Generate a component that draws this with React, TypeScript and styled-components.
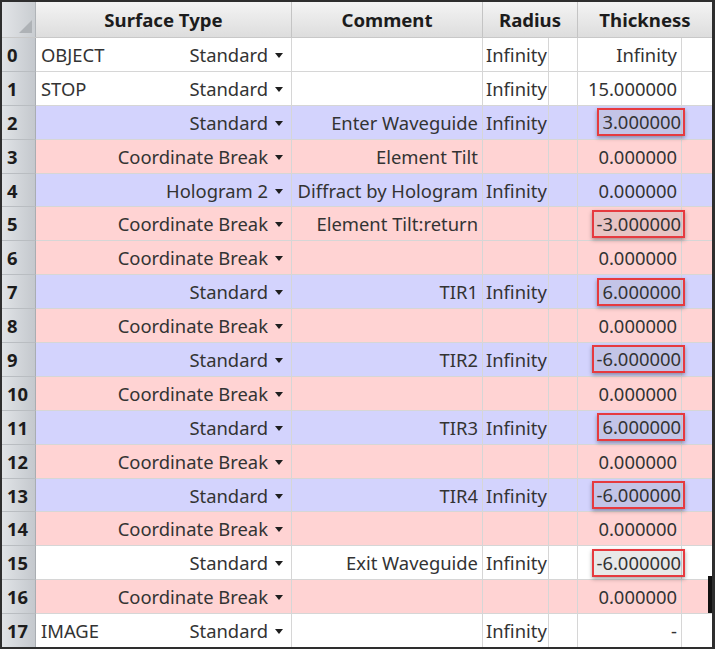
import React from "react";
import styled, { createGlobalStyle } from "styled-components";

const GlobalStyle = createGlobalStyle`
  html, body {
    margin: 0;
    padding: 0;
    background: #ffffff;
  }
  body {
    font-family: "Noto Sans", "Open Sans", sans-serif;
  }
`;

type Tone = "white" | "blue" | "pink";

type Surface = {
  label?: string;
  type: string;
  comment?: string;
  radius?: string;
  thickness: string;
  marked?: boolean;
  tone: Tone;
};

const surfaces: Surface[] = [
  { label: "OBJECT", type: "Standard", radius: "Infinity", thickness: "Infinity", tone: "white" },
  { label: "STOP", type: "Standard", radius: "Infinity", thickness: "15.000000", tone: "white" },
  { type: "Standard", comment: "Enter Waveguide", radius: "Infinity", thickness: "3.000000", marked: true, tone: "blue" },
  { type: "Coordinate Break", comment: "Element Tilt", thickness: "0.000000", tone: "pink" },
  { type: "Hologram 2", comment: "Diffract by Hologram", radius: "Infinity", thickness: "0.000000", tone: "blue" },
  { type: "Coordinate Break", comment: "Element Tilt:return", thickness: "-3.000000", marked: true, tone: "pink" },
  { type: "Coordinate Break", thickness: "0.000000", tone: "pink" },
  { type: "Standard", comment: "TIR1", radius: "Infinity", thickness: "6.000000", marked: true, tone: "blue" },
  { type: "Coordinate Break", thickness: "0.000000", tone: "pink" },
  { type: "Standard", comment: "TIR2", radius: "Infinity", thickness: "-6.000000", marked: true, tone: "blue" },
  { type: "Coordinate Break", thickness: "0.000000", tone: "pink" },
  { type: "Standard", comment: "TIR3", radius: "Infinity", thickness: "6.000000", marked: true, tone: "blue" },
  { type: "Coordinate Break", thickness: "0.000000", tone: "pink" },
  { type: "Standard", comment: "TIR4", radius: "Infinity", thickness: "-6.000000", marked: true, tone: "blue" },
  { type: "Coordinate Break", thickness: "0.000000", tone: "pink" },
  { type: "Standard", comment: "Exit Waveguide", radius: "Infinity", thickness: "-6.000000", marked: true, tone: "white" },
  { type: "Coordinate Break", thickness: "0.000000", tone: "pink" },
  { label: "IMAGE", type: "Standard", radius: "Infinity", thickness: "-", tone: "white" },
];

const toneColors: Record<Tone, string> = {
  white: "#ffffff",
  blue: "#d3d3fd",
  pink: "#ffd3d3",
};

const Frame = styled.div`
  position: relative;
  width: 715px;
  height: 649px;
  box-sizing: border-box;
  border: 2px solid #2e2e2e;
  border-right-width: 3px;
  overflow: hidden;
  background: #ffffff;
  color: #333333;
  font-size: 18.4px;
`;

const HeaderRow = styled.div`
  display: grid;
  grid-template-columns: 34px 256px 191px 95px 134px;
  height: 36px;
  box-sizing: border-box;
  border-bottom: 1px solid #c8c8c8;
  background: linear-gradient(#f4f4f4, #dddddd);
`;

const HeadCell = styled.div`
  display: flex;
  align-items: center;
  justify-content: center;
  box-sizing: border-box;
  border-right: 1px solid #c4c4c4;
  font-weight: 700;
  font-size: 18.6px;
  color: #1c1c1c;
  &:last-child {
    border-right: none;
  }
`;

const Corner = styled.div`
  position: relative;
  box-sizing: border-box;
  border-right: 1px solid #b0b4b8;
  background: linear-gradient(90deg, #e2e4e7, #c9cdd1);
  &::after {
    content: "";
    position: absolute;
    right: 3px;
    bottom: 4px;
    width: 0;
    height: 0;
    border-left: 13px solid transparent;
    border-bottom: 13px solid #aeb2b6;
  }
`;

const Row = styled.div<{ $tone: Tone }>`
  display: grid;
  grid-template-columns: 34px 256px 191px 66px 29px 104px 30px;
  height: 33.9px;
  box-sizing: border-box;
  border-bottom: 1px solid #d6d6d6;
  background: ${(p) => toneColors[p.$tone]};
`;

const NumberCell = styled.div`
  display: flex;
  align-items: center;
  padding-left: 5px;
  box-sizing: border-box;
  border-right: 1px solid #a9adb2;
  background: linear-gradient(90deg, #e0e3e6, #c4c8cd);
  font-weight: 700;
  color: #1c1c1c;
  margin-bottom: -1px;
  border-bottom: 1px solid #b9bdc1;
`;

const Cell = styled.div<{ $align?: "left" | "right" }>`
  display: flex;
  align-items: center;
  justify-content: ${(p) => (p.$align === "right" ? "flex-end" : "flex-start")};
  padding: 0 4px;
  box-sizing: border-box;
  border-right: 1px solid #d6d6d6;
  white-space: nowrap;
  overflow: visible;
  position: relative;
  &:last-child {
    border-right: none;
  }
`;

const RadiusCell = styled(Cell)`
  padding: 0 2px 0 3px;
`;

const TypeCell = styled(Cell)`
  justify-content: space-between;
  padding: 0 8px 0 5px;
`;

const TypeName = styled.span`
  display: flex;
  align-items: center;
  gap: 7px;
`;

const Caret = styled.span`
  width: 0;
  height: 0;
  border-left: 4px solid transparent;
  border-right: 4px solid transparent;
  border-top: 5px solid #1e1e1e;
  margin-top: 2px;
`;

const Marked = styled.span`
  display: inline-block;
  padding: 0 2px 0 3px;
  margin-right: -8px;
  line-height: 24px;
  border: 2px solid #e63a3f;
  background: rgba(110, 120, 120, 0.16);
  box-shadow: 0 2px 4px rgba(0, 0, 0, 0.35);
  position: relative;
  z-index: 1;
`;

const ScrollMark = styled.div`
  position: absolute;
  right: 0;
  top: 574px;
  width: 4px;
  height: 37px;
  background: #111111;
`;

export default function App() {
  return (
    <>
      <GlobalStyle />
      <Frame>
        <HeaderRow>
          <Corner />
          <HeadCell>Surface Type</HeadCell>
          <HeadCell>Comment</HeadCell>
          <HeadCell>Radius</HeadCell>
          <HeadCell>Thickness</HeadCell>
        </HeaderRow>
        {surfaces.map((s, i) => (
          <Row key={i} $tone={s.tone}>
            <NumberCell>{i}</NumberCell>
            <TypeCell>
              <span>{s.label || ""}</span>
              <TypeName>
                {s.type}
                <Caret />
              </TypeName>
            </TypeCell>
            <Cell $align="right">{s.comment || ""}</Cell>
            <RadiusCell>{s.radius || ""}</RadiusCell>
            <Cell />
            <Cell $align="right">
              {s.marked ? <Marked>{s.thickness}</Marked> : s.thickness}
            </Cell>
            <Cell />
          </Row>
        ))}
        <ScrollMark />
      </Frame>
    </>
  );
}
